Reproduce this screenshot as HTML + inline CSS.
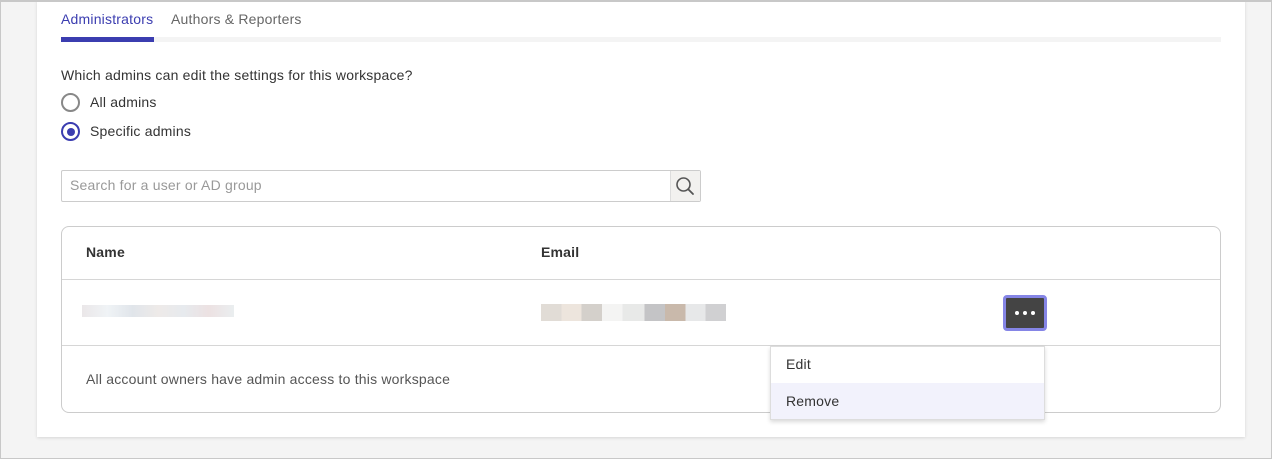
<!DOCTYPE html>
<html><head><style>
*{box-sizing:border-box;margin:0;padding:0}
body{width:1272px;height:459px;background:#f4f4f4;font-family:"Liberation Sans",sans-serif;position:relative;overflow:hidden;letter-spacing:0.2px}
.card{position:absolute;left:37px;top:0;width:1208px;height:437px;background:#fff;box-shadow:0 1px 3px rgba(0,0,0,.12)}
.a{position:absolute}
.t{font-size:14px;color:#333}
.frame{position:absolute;left:0;top:0;width:1272px;height:459px;border:1px solid #c8c8c8;border-top-width:2px;pointer-events:none}
</style></head><body>
<div class="card"></div>
<div class="a" style="left:61px;top:11px;font-size:14px;color:#3b3db0">Administrators</div>
<div class="a" style="left:171px;top:11px;font-size:14px;color:#666">Authors &amp; Reporters</div>
<div class="a" style="left:61px;top:37px;width:1160px;height:5px;background:#f4f4f4"></div>
<div class="a" style="left:61px;top:37px;width:93px;height:5px;background:#3b3db0"></div>
<div class="a t" style="left:61px;top:67px">Which admins can edit the settings for this workspace?</div>
<div class="a" style="left:61px;top:93px;width:19px;height:19px;border:2px solid #888;border-radius:50%"></div>
<div class="a t" style="left:90px;top:94px">All admins</div>
<div class="a" style="left:61px;top:122px;width:19px;height:19px;border:2px solid #3b3db0;border-radius:50%"></div>
<div class="a" style="left:66.5px;top:127.5px;width:8px;height:8px;background:#3b3db0;border-radius:50%"></div>
<div class="a t" style="left:90px;top:123px">Specific admins</div>
<div class="a" style="left:61px;top:170px;width:640px;height:32px;border:1px solid #ccc;border-radius:2px"></div>
<div class="a" style="left:70px;top:177px;font-size:14px;color:#999">Search for a user or AD group</div>
<div class="a" style="left:670px;top:171px;width:30px;height:30px;background:#f2f1ef;border-left:1px solid #ddd"></div>
<svg class="a" style="left:674px;top:175px" width="22" height="22" viewBox="0 0 22 22"><circle cx="9.5" cy="9.5" r="6.5" fill="none" stroke="#555" stroke-width="1.6"/><path d="M14.2 14.2L19 19" stroke="#555" stroke-width="1.8" stroke-linecap="round"/></svg>
<div class="a" style="left:61px;top:226px;width:1160px;height:187px;border:1px solid #ccc;border-radius:8px"></div>
<div class="a" style="left:86px;top:244px;font-size:14px;font-weight:bold;color:#333">Name</div>
<div class="a" style="left:541px;top:244px;font-size:14px;font-weight:bold;color:#333">Email</div>
<div class="a" style="left:62px;top:279px;width:1158px;height:1px;background:#d6d6d6"></div>
<div class="a" style="left:62px;top:345px;width:1158px;height:1px;background:#d6d6d6"></div>
<div class="a" style="left:82px;top:305px;width:152px;height:12px;background:linear-gradient(90deg,#e8e4e6,#eef2f5,#dde2e8,#ece8e6,#e4e8ec,#eadedf,#e8ecee);opacity:.9"></div>
<div class="a" style="left:541px;top:304px;width:185px;height:17px;background:linear-gradient(90deg,#e1dcd6 0 11%,#ede5dd 11% 22%,#d4d0cb 22% 33%,#f4f4f3 33% 44%,#e8e9e8 44% 56%,#c4c4c6 56% 67%,#c9b9ab 67% 78%,#e7e8e9 78% 89%,#d0d0d2 89%)"></div>
<div class="a" style="left:1003px;top:295px;width:44px;height:36px;background:#444;border:3px solid #8585e6;border-radius:4px"></div>
<div class="a" style="left:1015px;top:311px;font-size:0">
<span style="display:inline-block;width:4px;height:4px;border-radius:50%;background:#fff;margin-right:4px"></span><span style="display:inline-block;width:4px;height:4px;border-radius:50%;background:#fff;margin-right:4px"></span><span style="display:inline-block;width:4px;height:4px;border-radius:50%;background:#fff"></span></div>
<div class="a" style="left:86px;top:371px;font-size:14px;color:#555">All account owners have admin access to this workspace</div>
<div class="a" style="left:770px;top:346px;width:275px;height:74px;background:#fff;border:1px solid #ddd;box-shadow:0 2px 4px rgba(0,0,0,.15)"></div>
<div class="a" style="left:771px;top:383px;width:273px;height:36px;background:#f2f2fc"></div>
<div class="a t" style="left:786px;top:356px">Edit</div>
<div class="a t" style="left:786px;top:393px">Remove</div>
<div class="frame"></div>
</body></html>
